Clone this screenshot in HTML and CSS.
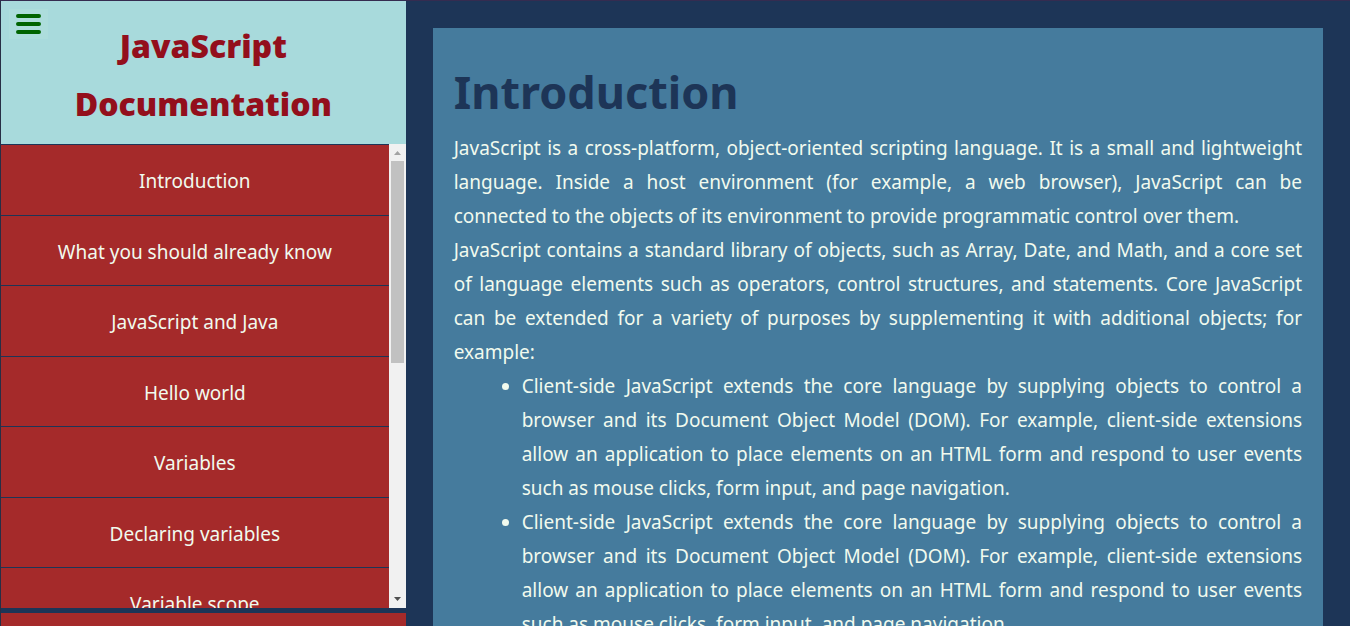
FILE: index.html
```html
<!DOCTYPE html>
<html lang="en">
<head>
<meta charset="utf-8">
<title>JavaScript Documentation</title>
<link rel="stylesheet" href="styles.css">
</head>
<body>
<div class="page">
  <nav class="sidebar" aria-label="Documentation sections">
    <header class="sidebar-header">
      <button class="menu-button" type="button" aria-label="Toggle menu">
        <svg width="25" height="20" viewBox="0 0 25 20" aria-hidden="true"><path d="M2 2H23M2 10H23M2 18H23" stroke="#006400" stroke-width="4" stroke-linecap="round"/></svg>
      </button>
      <h1 class="sidebar-title">JavaScript Documentation</h1>
    </header>
    <div class="nav-panel">
      <ul class="nav-list">
        <li class="nav-item"><a class="nav-link" href="#introduction">Introduction</a></li>
        <li class="nav-item"><a class="nav-link" href="#know">What you should already know</a></li>
        <li class="nav-item"><a class="nav-link" href="#java">JavaScript and Java</a></li>
        <li class="nav-item"><a class="nav-link" href="#hello">Hello world</a></li>
        <li class="nav-item"><a class="nav-link" href="#variables">Variables</a></li>
        <li class="nav-item"><a class="nav-link" href="#declaring">Declaring variables</a></li>
        <li class="nav-item"><a class="nav-link" href="#scope">Variable scope</a></li>
      </ul>
      <div class="scrollbar" aria-hidden="true">
        <svg class="scroll-arrow" width="17" height="17" viewBox="0 0 17 17"><path d="M5 11L8.500 7L12 11Z" fill="#a3a3a3"/></svg>
        <div class="scroll-track"><div class="scroll-thumb"></div></div>
        <svg class="scroll-arrow" width="17" height="17" viewBox="0 0 17 17"><path d="M5 6L8.500 10L12 6Z" fill="#505050"/></svg>
      </div>
    </div>
    <div class="sidebar-footer"></div>
  </nav>
  <main class="content">
    <section class="card" id="introduction">
      <h2 class="card-title">Introduction</h2>
      <p class="text">JavaScript is a cross-platform, object-oriented scripting language. It is a small and lightweight language. Inside a host environment (for example, a web browser), JavaScript can be connected to the objects of its environment to provide programmatic control over them.</p>
      <p class="text">JavaScript contains a standard library of objects, such as Array, Date, and Math, and a core set of language elements such as operators, control structures, and statements. Core JavaScript can be extended for a variety of purposes by supplementing it with additional objects; for example:</p>
      <ul class="bullets">
        <li>Client-side JavaScript extends the core language by supplying objects to control a browser and its Document Object Model (DOM). For example, client-side extensions allow an application to place elements on an HTML form and respond to user events such as mouse clicks, form input, and page navigation.</li>
        <li>Client-side JavaScript extends the core language by supplying objects to control a browser and its Document Object Model (DOM). For example, client-side extensions allow an application to place elements on an HTML form and respond to user events such as mouse clicks, form input, and page navigation.</li>
      </ul>
    </section>
  </main>
</div>
</body>
</html>
```
FILE: styles.css
```css
* {
  box-sizing: border-box;
  margin: 0;
  padding: 0;
}

body {
  background: #1d3557;
  color: #f1faee;
  font-family: "Segoe UI", "Noto Sans", sans-serif;
  font-size: 19px;
  line-height: 34px;
}

.page {
  display: flex;
  height: 100vh;
  overflow: hidden;
  border-top: 1px solid #352c50;
  border-left: 1px solid #272e45;
}

.sidebar {
  display: flex;
  flex-direction: column;
  flex: 0 0 30%;
}

.sidebar-header {
  position: relative;
  padding: 16px 60px 11px;
  background: #a8dadc;
}

.menu-button {
  position: absolute;
  top: 8px;
  left: 8px;
  display: grid;
  place-items: center;
  width: 39px;
  height: 30px;
  border: 0;
  background: #addddc;
  cursor: pointer;
}

.sidebar-title {
  color: #930f1c;
  font-family: "Segoe UI", "Noto Sans", sans-serif;
  font-size: 32px;
  font-weight: 900;
  line-height: 58px;
  text-align: center;
}

.nav-panel {
  display: flex;
  flex: 1;
  min-height: 0;
}

.nav-list {
  display: grid;
  grid-auto-rows: 71px 70px;
  align-content: start;
  flex: 1;
  overflow: hidden;
  list-style: none;
}

.nav-item {
  display: grid;
  border-top: 1px solid #1d3557;
  background: #a52a2a;
}

.nav-link {
  display: grid;
  place-items: center;
  padding-top: 2px;
  color: inherit;
  text-decoration: none;
}

.scrollbar {
  display: flex;
  flex-direction: column;
  width: 17px;
  background: #f1f1f1;
}

.scroll-arrow {
  display: block;
}

.scroll-track {
  flex: 1;
  padding: 0 2px;
}

.scroll-thumb {
  height: 47%;
  background: #c1c1c1;
}

.sidebar-footer {
  height: 18px;
  border-top: 5px solid #1d3557;
  background: #a52a2a;
}

.content {
  flex: 1;
  min-width: 0;
  padding: 27px;
}

.card {
  padding: 25px 21px;
  background: #457b9d;
}

.card-title {
  color: #1d3557;
  font-size: 45px;
  font-weight: 700;
  line-height: 78px;
}

.text {
  text-align: justify;
}

.bullets {
  padding-left: 68px;
  text-align: justify;
}
```
